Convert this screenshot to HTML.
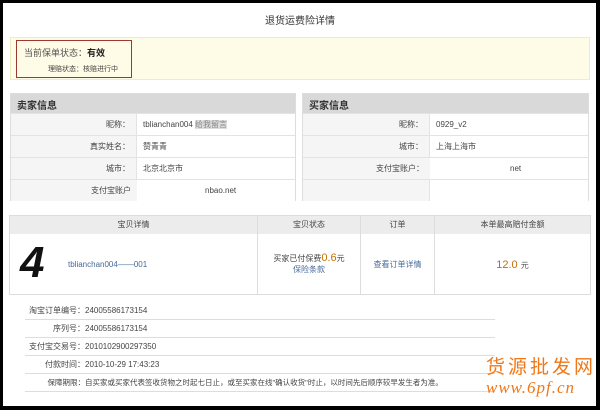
<!DOCTYPE html>
<html><head><meta charset="utf-8"><style>
*{margin:0;padding:0;box-sizing:border-box}
body{width:600px;height:410px;background:#000;font-family:"Liberation Sans","Noto Sans CJK SC",sans-serif;font-size:8px;color:#444;position:relative;overflow:hidden}
.pg{position:absolute;left:3px;top:3px;width:593px;height:403px;background:#fff}
.a{position:absolute}
.title{left:0;width:600px;top:12px;text-align:center;font-size:10px;color:#333}
.yel{left:10px;top:37px;width:580px;height:43px;background:#fefbe6;border:1px solid #f2ecc4}
.red{left:16px;top:40px;width:116px;height:38px;border:1px solid #9a3a30}
.box{border:1px solid #ddd;background:#fff}
.hd{background:#d9d9d9;height:19px;font-size:10px;font-weight:bold;color:#333;padding:3px 6px}
.row{height:22px;border-top:1px solid #e3e3e3;display:flex;background:#f5f5f5}
.row .l{text-align:right;padding-right:6px;line-height:21px;border-right:1px solid #e3e3e3}
.row .v{background:#fff;flex:1;line-height:21px;padding-left:6px}
.th{background:#ececec;height:18px;line-height:18px;text-align:center;border-right:1px solid #ddd}
.ln{left:25px;width:470px;border-bottom:1px solid #ddd;height:18px;line-height:17px;white-space:nowrap}
.ln i{font-style:normal;display:inline-block;width:60px;text-align:right;white-space:nowrap}
</style></head><body><div class="pg"></div>
<div class="a title">退货运费险详情</div>
<div class="a yel"></div>
<div class="a red"></div>
<div class="a" style="left:24px;top:46px;font-size:9px;color:#555">当前保单状态：<b style="color:#222">有效</b></div>
<div class="a" style="left:48px;top:64px;font-size:7px">理赔状态：核赔进行中</div>

<div class="a box" style="left:10px;top:93px;width:286px;height:108px">
<div class="hd">卖家信息</div>
<div class="row"><div class="l" style="width:126px">昵称：</div><div class="v">tblianchan004 <span style="background:#ddd;color:#888">给我留言</span></div></div>
<div class="row"><div class="l" style="width:126px">真实姓名：</div><div class="v">赞青青</div></div>
<div class="row"><div class="l" style="width:126px">城市：</div><div class="v">北京北京市</div></div>
<div class="row"><div class="l" style="width:126px;border:0">支付宝账户</div><div class="v" style="background:#fff;padding-left:68px">nbao.net</div></div>
</div>
<div class="a box" style="left:302px;top:93px;width:287px;height:108px">
<div class="hd">买家信息</div>
<div class="row"><div class="l" style="width:127px">昵称：</div><div class="v">0929_v2</div></div>
<div class="row"><div class="l" style="width:127px">城市：</div><div class="v">上海上海市</div></div>
<div class="row"><div class="l" style="width:127px;border:0">支付宝账户：</div><div class="v" style="background:#fff;padding-left:80px">net</div></div>
<div class="row"><div class="l" style="width:127px"></div><div class="v"></div></div>
</div>

<div class="a box" style="left:9px;top:215px;width:582px;height:80px;display:flex;flex-direction:column">
<div style="display:flex"><div class="th" style="width:248px">宝贝详情</div><div class="th" style="width:103px">宝贝状态</div><div class="th" style="width:74px">订单</div><div class="th" style="flex:1;border:0">本单最高赔付金额</div></div>
<div style="display:flex;flex:1;align-items:center;text-align:center">
<div style="width:248px;height:61px;border-right:1px solid #ddd;text-align:left;position:relative"><span class="a" style="left:10px;top:4px;font-size:44px;font-weight:bold;color:#111;font-style:italic;line-height:50px">4</span><span class="a" style="left:58px;top:26px;color:#466a9a">tblianchan004——001</span></div>
<div style="width:103px;height:61px;border-right:1px solid #ddd;padding-top:18px">买家已付保费<span style="color:#c07000;font-size:11px">0.6</span>元<br><span style="color:#466a9a">保险条款</span></div>
<div style="width:74px;height:61px;border-right:1px solid #ddd;line-height:61px;color:#466a9a">查看订单详情</div>
<div style="flex:1;color:#c07000;font-size:11px">12.0 <span style="font-size:8px;color:#555">元</span></div>
</div></div>

<div class="a ln" style="top:302px"><i>淘宝订单编号：</i>24005586173154</div>
<div class="a ln" style="top:320px"><i>序列号：</i>24005586173154</div>
<div class="a ln" style="top:338px"><i>支付宝交易号：</i>2010102900297350</div>
<div class="a ln" style="top:356px"><i>付款时间：</i>2010-10-29 17:43:23</div>
<div class="a ln" style="top:374px;font-size:7.5px"><i>保障期限：</i>自买家或买家代表签收货物之时起七日止，或至买家在线"确认收货"时止，以时间先后顺序较早发生者为准。</div>
<div class="a" style="left:486px;top:352px;font-size:19px;color:#f07818;letter-spacing:3px">货源批发网</div>
<div class="a" style="left:486px;top:378px;font-size:17px;color:#f07818;font-family:'Liberation Serif',serif;font-style:italic;letter-spacing:1px">www.6pf.cn</div>
</body></html>
